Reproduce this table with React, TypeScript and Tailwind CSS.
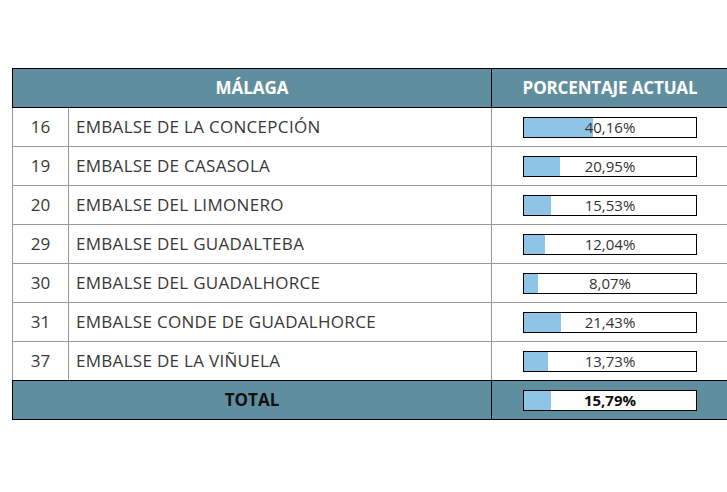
import React from "react";

const rows = [
  { n: "16", name: "EMBALSE DE LA CONCEPCIÓN", pct: 40.16 },
  { n: "19", name: "EMBALSE DE CASASOLA", pct: 20.95 },
  { n: "20", name: "EMBALSE DEL LIMONERO", pct: 15.53 },
  { n: "29", name: "EMBALSE DEL GUADALTEBA", pct: 12.04 },
  { n: "30", name: "EMBALSE DEL GUADALHORCE", pct: 8.07 },
  { n: "31", name: "EMBALSE CONDE DE GUADALHORCE", pct: 21.43 },
  { n: "37", name: "EMBALSE DE LA VIÑUELA", pct: 13.73 },
];

function fmt(v: number) {
  return v.toFixed(2).replace(".", ",") + "%";
}

function Bar({ pct, bold }: { pct: number; bold?: boolean }) {
  return (
    <div className="relative w-[174px] h-[21px] border border-black bg-white">
      <div className="absolute left-0 top-0 bottom-0 bg-[#8ec4e5]" style={{ width: `${pct}%` }} />
      <div
        className={`relative flex h-full items-center justify-center text-[15px] leading-none ${
          bold ? "font-bold text-[#111]" : "text-[#333]"
        }`}
      >
        {fmt(pct)}
      </div>
    </div>
  );
}

export default function App() {
  return (
    <div
      className="w-[727px] h-[492px] overflow-hidden bg-white pt-[68px] pl-[12px]"
      style={{ fontFamily: '"Open Sans", "Noto Sans", sans-serif' }}
    >
      <div className="w-[717px]">
        <div className="flex h-[40px] border-y border-black bg-[#5f8f9f] text-white font-bold text-[17px]">
          <div className="w-[480px] flex items-center justify-center border-x border-black">MÁLAGA</div>
          <div className="flex-1 flex items-center justify-center border-r border-black tracking-[-0.15px]">
            PORCENTAJE ACTUAL
          </div>
        </div>
        {rows.map((r, i) => (
          <div
            key={r.n}
            className={`flex text-[17px] text-[#383838] ${i < rows.length - 1 ? "h-[39px] border-b border-[#9a9a9a]" : "h-[38px]"}`}
          >
            <div className="w-[57px] flex items-center justify-center border-x border-[#9a9a9a]">{r.n}</div>
            <div className="w-[423px] flex items-center pl-[7px] border-r border-[#9a9a9a] tracking-[0.3px]">
              {r.name}
            </div>
            <div className="flex-1 flex items-center justify-center border-r border-[#9a9a9a]">
              <Bar pct={r.pct} />
            </div>
          </div>
        ))}
        <div className="flex h-[40px] border-y border-black bg-[#5f8f9f] text-[#111] font-bold text-[17px]">
          <div className="w-[480px] flex items-center justify-center border-x border-black">TOTAL</div>
          <div className="flex-1 flex items-center justify-center border-r border-black">
            <Bar pct={15.79} bold />
          </div>
        </div>
      </div>
    </div>
  );
}
